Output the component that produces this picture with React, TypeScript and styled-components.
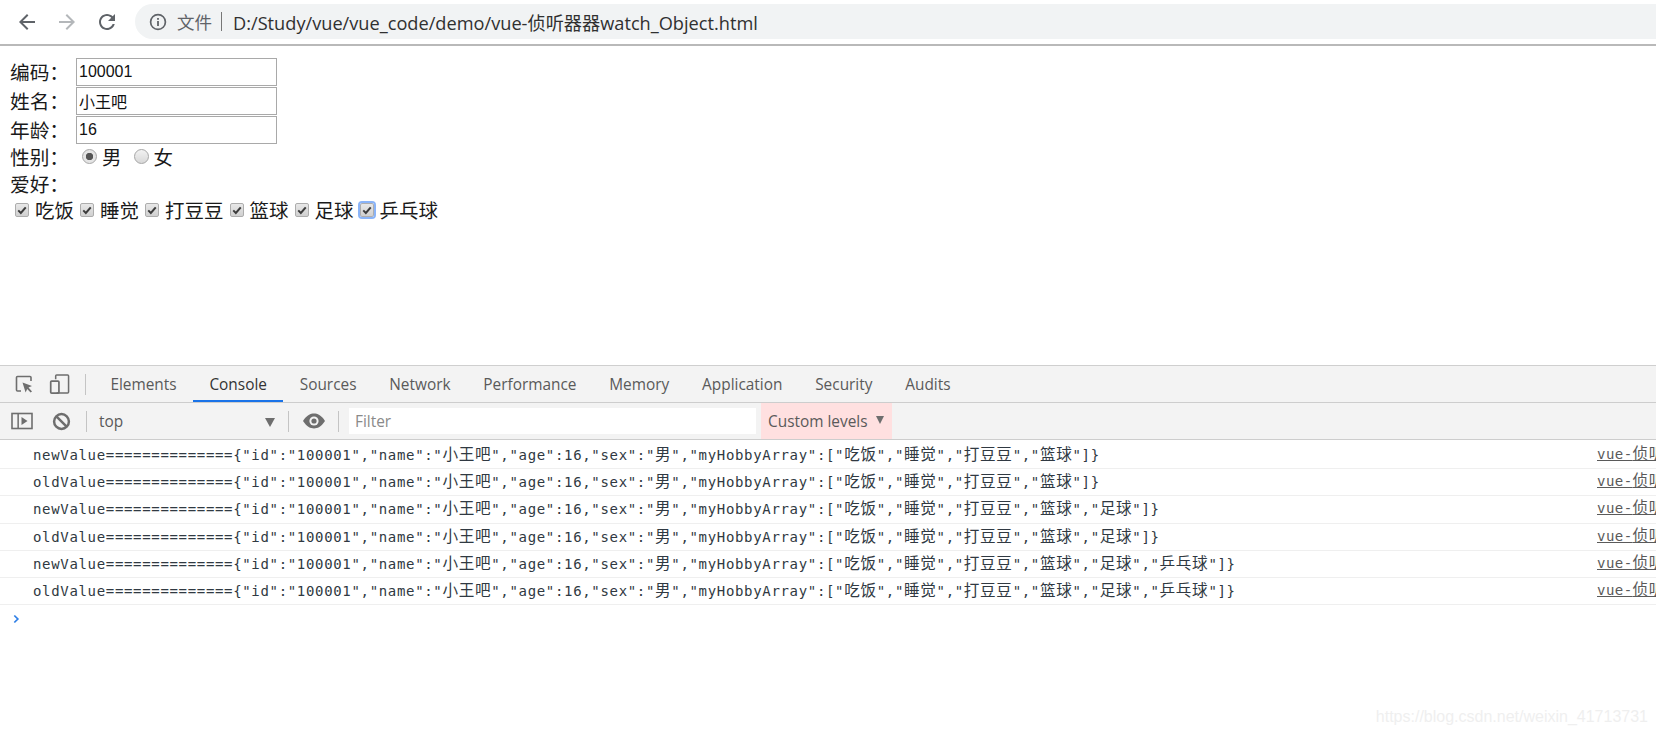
import React from "react";
import styled, { createGlobalStyle } from "styled-components";

const CJK = '"Noto Sans CJK SC", sans-serif';
const UI = '"Open Sans", "Noto Sans CJK SC", sans-serif';
const MONO = '"DejaVu Sans Mono", "Noto Sans CJK SC", monospace';

const tabs = ["Elements", "Console", "Sources", "Network", "Performance", "Memory", "Application", "Security", "Audits"];
const hobbies = ["吃饭", "睡觉", "打豆豆", "篮球", "足球", "乒乓球"];

const base = '{"id":"100001","name":"小王吧","age":16,"sex":"男","myHobbyArray":["吃饭","睡觉","打豆豆","篮球"';
const logs = [
  `newValue==============${base}]}`,
  `oldValue==============${base}]}`,
  `newValue==============${base},"足球"]}`,
  `oldValue==============${base},"足球"]}`,
  `newValue==============${base},"足球","乒乓球"]}`,
  `oldValue==============${base},"足球","乒乓球"]}`,
];

const App = () => {
  return (
    <Window>
      <GlobalStyle />
      <BrowserBar>
        <NavButton $dim={false}>
          <svg viewBox="0 0 24 24" width="24" height="24"><path d="M20 11H7.83l5.59-5.59L12 4l-8 8 8 8 1.41-1.41L7.83 13H20v-2z" /></svg>
        </NavButton>
        <NavButton $dim={true}>
          <svg viewBox="0 0 24 24" width="24" height="24"><path d="M4 11h12.17l-5.59-5.59L12 4l8 8-8 8-1.41-1.41L16.17 13H4v-2z" /></svg>
        </NavButton>
        <NavButton $dim={false}>
          <svg viewBox="0 0 24 24" width="24" height="24"><path d="M17.65 6.35C16.2 4.9 14.21 4 12 4c-4.42 0-7.99 3.58-7.99 8s3.57 8 7.99 8c3.73 0 6.84-2.55 7.73-6h-2.08c-.82 2.33-3.04 4-5.65 4-3.31 0-6-2.69-6-6s2.69-6 6-6c1.66 0 3.14.69 4.22 1.78L13 11h7V4l-2.35 2.35z" /></svg>
        </NavButton>
        <AddressPill>
          <svg viewBox="0 0 18 18" width="18" height="18">
            <circle cx="9" cy="9" r="7.4" fill="none" stroke="#5f6368" strokeWidth="1.7" />
            <rect x="8.1" y="8" width="1.8" height="5" fill="#5f6368" />
            <rect x="8.1" y="5" width="1.8" height="1.8" fill="#5f6368" />
          </svg>
          <Scheme>文件</Scheme>
          <SchemeBar />
          <Url>D:/Study/vue/vue_code/demo/vue-侦听器器watch_Object.html</Url>
        </AddressPill>
      </BrowserBar>

      <Page>
        <FieldRow>
          <FieldLabel>编码：</FieldLabel>
          <TextInput readOnly value="100001" />
        </FieldRow>
        <FieldRow>
          <FieldLabel>姓名：</FieldLabel>
          <TextInput readOnly value="小王吧" />
        </FieldRow>
        <FieldRow>
          <FieldLabel>年龄：</FieldLabel>
          <TextInput readOnly value="16" />
        </FieldRow>
        <ChoiceRow $h={25}>
          <FieldLabel>性别：</FieldLabel>
          <Radio $on={true} />
          <ChoiceText>男</ChoiceText>
          <Radio $on={false} />
          <ChoiceText>女</ChoiceText>
        </ChoiceRow>
        <ChoiceRow $h={29}>
          <FieldLabel>爱好：</FieldLabel>
        </ChoiceRow>
        <HobbyRow>
          {hobbies.map((h, i) => (
            <Hobby key={h}>
              <CheckBox $focused={i === 5}>
                <svg viewBox="0 0 12 12" width="10" height="10">
                  <path d="M1.5 6.5 L4.6 9.6 L10.5 2.8" fill="none" stroke="#3c3c3c" strokeWidth="2.4" />
                </svg>
              </CheckBox>
              <ChoiceText>{h}</ChoiceText>
            </Hobby>
          ))}
        </HobbyRow>
      </Page>

      <DevTools>
        <TabBar>
          <TabIcon>
            <svg viewBox="0 0 20 20" width="20" height="20">
              <path d="M7 17H3.5a1 1 0 0 1-1-1V3.5a1 1 0 0 1 1-1H16a1 1 0 0 1 1 1V7" fill="none" stroke="#6e6e6e" strokeWidth="1.6" />
              <path d="M8.5 8.5 L18 12 L14.5 13.6 L18 17.4 L16.6 18.6 L13.2 15 L11.6 18.4 Z" fill="#6e6e6e" />
            </svg>
          </TabIcon>
          <TabIcon>
            <svg viewBox="0 0 22 22" width="22" height="22">
              <path d="M7 6V2.5a1 1 0 0 1 1-1h11.5a1 1 0 0 1 1 1v17a1 1 0 0 1-1 1H8" fill="none" stroke="#6e6e6e" strokeWidth="1.6" />
              <rect x="1.8" y="8" width="8.6" height="12.6" rx="1" fill="none" stroke="#6e6e6e" strokeWidth="1.8" />
            </svg>
          </TabIcon>
          <Divider $left={7} $right={8} />
          {tabs.map((t) => (
            <Tab key={t} $active={t === "Console"}>{t}</Tab>
          ))}
        </TabBar>

        <ConsoleBar>
          <BarIcon $w={22} $ml={11}>
            <svg viewBox="0 0 22 18" width="22" height="18">
              <rect x="1" y="1.5" width="20" height="15" fill="none" stroke="#6e6e6e" strokeWidth="1.6" />
              <rect x="6.4" y="1.5" width="1.5" height="15" fill="#6e6e6e" />
              <path d="M10.5 5 L16.5 9 L10.5 13 Z" fill="#6e6e6e" />
            </svg>
          </BarIcon>
          <BarIcon $w={19} $ml={19}>
            <svg viewBox="0 0 20 20" width="19" height="19">
              <circle cx="10" cy="10" r="7.8" fill="none" stroke="#6e6e6e" strokeWidth="2.6" />
              <path d="M4.6 4.6 L15.4 15.4" stroke="#6e6e6e" strokeWidth="2.6" />
            </svg>
          </BarIcon>
          <Divider $left={15} $right={0} />
          <ContextSelect>
            top
            <Caret />
          </ContextSelect>
          <Divider $left={0} $right={0} />
          <BarIcon $w={24} $ml={13}>
            <svg viewBox="0 0 24 16" width="24" height="16">
              <path d="M1 8 C5 2 8.5 0.6 12 0.6 S19 2 23 8 C19 14 15.5 15.4 12 15.4 S5 14 1 8 Z" fill="#6e6e6e" />
              <circle cx="12" cy="8" r="4.6" fill="#f3f3f3" />
              <circle cx="12" cy="8" r="2.6" fill="#6e6e6e" />
            </svg>
          </BarIcon>
          <Divider $left={12} $right={10} />
          <FilterBox>Filter</FilterBox>
          <LevelsButton>
            Custom levels
            <LevelsCaret />
          </LevelsButton>
        </ConsoleBar>

        <LogArea>
          {logs.map((line, i) => (
            <LogRow key={i}>
              <LogText>
                {line.split(/([\u4e00-\u9fff]+)/).map((part, j) =>
                  j % 2 === 1 ? <Han key={j}>{part}</Han> : part
                )}
              </LogText>
              <SourceLink>vue-<Han>侦听器器</Han>watch_Object.html:1</SourceLink>
            </LogRow>
          ))}
          <Prompt>
            <svg viewBox="0 0 8 10" width="7" height="10">
              <path d="M1.5 1 L5.5 5 L1.5 9" fill="none" stroke="#2f7fe6" strokeWidth="2" />
            </svg>
          </Prompt>
        </LogArea>
        <Watermark>https://blog.csdn.net/weixin_41713731</Watermark>
      </DevTools>
    </Window>
  );
};

const GlobalStyle = createGlobalStyle`
  html, body {
    margin: 0;
    padding: 0;
    background: #fff;
    overflow: hidden;
  }
  * {
    box-sizing: border-box;
  }
`;

const Window = styled.div`
  width: 1656px;
  height: 735px;
  display: flex;
  flex-direction: column;
  overflow: hidden;
`;

const BrowserBar = styled.div`
  height: 46px;
  flex: none;
  display: flex;
  align-items: flex-start;
  padding: 4px 0 0 15px;
  background: #fff;
  border-bottom: 2px solid #b9b9b9;
`;
const NavButton = styled.div<{ $dim: boolean }>`
  width: 40px;
  height: 35px;
  display: flex;
  align-items: center;
  svg {
    fill: ${({ $dim }) => ($dim ? "#b4b7ba" : "#5f6368")};
  }
`;
const AddressPill = styled.div`
  flex: 1;
  height: 35px;
  padding-left: 14px;
  display: flex;
  align-items: center;
  background: #f1f3f4;
  border-radius: 18px 0 0 18px;
`;
const Scheme = styled.span`
  margin-left: 10px;
  font: 17.5px ${CJK};
  color: #5f6368;
`;
const SchemeBar = styled.span`
  width: 1px;
  height: 19px;
  margin: 0 11px 0 9px;
  background: #777;
`;
const Url = styled.span`
  font: 18.2px ${UI};
  color: #303030;
`;

const Page = styled.div`
  height: 319px;
  flex: none;
  padding-top: 11px;
  background: #fff;
`;
const FieldRow = styled.div`
  height: 29px;
  display: flex;
  align-items: center;
  padding-left: 10px;
`;
const FieldLabel = styled.span`
  width: 66px;
  flex: none;
  font: 19.7px/1 ${CJK};
  color: #1a1a1a;
`;
const TextInput = styled.input`
  width: 201px;
  height: 28px;
  padding: 0 2px;
  border: 1px solid #a9a9a9;
  outline: none;
  font: 16px "Liberation Sans", ${CJK};
  color: #111;
`;
const ChoiceRow = styled.div<{ $h: number }>`
  height: ${({ $h }) => $h}px;
  display: flex;
  align-items: center;
  padding-left: 10px;
`;
const Radio = styled.span<{ $on: boolean }>`
  width: 15px;
  height: 15px;
  margin: 0 5px 0 6px;
  flex: none;
  border-radius: 50%;
  border: 1px solid #a6a6a6;
  background: ${({ $on }) =>
    $on
      ? "radial-gradient(circle, #555 0 3.4px, #e4e4e4 4px)"
      : "linear-gradient(#f2f2f2, #d8d8d8)"};
  & + span + & {
    margin-left: 12px;
  }
`;
const ChoiceText = styled.span`
  font: 19.5px/1 ${CJK};
  color: #1a1a1a;
`;
const HobbyRow = styled.div`
  height: 23px;
  display: flex;
  align-items: center;
  padding-left: 15px;
  gap: 6px;
`;
const Hobby = styled.div`
  display: flex;
  align-items: center;
  gap: 6px;
`;
const CheckBox = styled.span<{ $focused: boolean }>`
  width: 14px;
  height: 14px;
  flex: none;
  display: flex;
  align-items: center;
  justify-content: center;
  border-radius: 2px;
  border: 1px solid #adadad;
  background: linear-gradient(#e8e8e8, #d0d0d0);
  outline: ${({ $focused }) => ($focused ? "2px solid #8ab4f8" : "none")};
`;

const DevTools = styled.div`
  position: relative;
  flex: 1;
  display: flex;
  flex-direction: column;
  min-height: 0;
`;
const TabBar = styled.div`
  height: 38px;
  flex: none;
  display: flex;
  align-items: center;
  padding-left: 14px;
  background: #f3f3f3;
  border-top: 1px solid #cfcfcf;
  border-bottom: 1px solid #cdcdcd;
`;
const TabIcon = styled.span`
  width: 21px;
  margin-right: 14px;
  display: flex;
  align-items: center;
  &:nth-child(2) {
    margin-right: 8px;
  }
`;
const Divider = styled.span<{ $left: number; $right: number }>`
  width: 1px;
  height: 21px;
  flex: none;
  margin: 0 ${({ $right }) => $right}px 0 ${({ $left }) => $left}px;
  background: #c4c4c4;
`;
const Tab = styled.div<{ $active: boolean }>`
  height: 100%;
  padding: 0 16.4px;
  display: flex;
  align-items: center;
  font: 15.4px ${UI};
  color: ${({ $active }) => ($active ? "#333" : "#5a5a5a")};
  box-shadow: ${({ $active }) => ($active ? "inset 0 -2px 0 #1a73e8" : "none")};
`;
const ConsoleBar = styled.div`
  height: 37px;
  flex: none;
  display: flex;
  align-items: center;
  background: #f3f3f3;
  border-bottom: 1px solid #cdcdcd;
`;
const BarIcon = styled.span<{ $w: number; $ml: number }>`
  width: ${({ $w }) => $w}px;
  margin-left: ${({ $ml }) => $ml}px;
  flex: none;
  display: flex;
  align-items: center;
`;
const ContextSelect = styled.div`
  position: relative;
  width: 201px;
  padding-left: 12px;
  font: 15.4px ${UI};
  color: #5a5a5a;
`;
const Caret = styled.span`
  position: absolute;
  top: 7px;
  right: 13px;
  border-left: 5px solid transparent;
  border-right: 5px solid transparent;
  border-top: 9px solid #6e6e6e;
`;
const FilterBox = styled.div`
  width: 407px;
  height: 26px;
  padding-left: 6px;
  display: flex;
  align-items: center;
  background: #fff;
  font: 15.4px ${UI};
  color: #8a8a8a;
`;
const LevelsButton = styled.div`
  position: relative;
  width: 131px;
  height: 36px;
  margin-left: 5px;
  padding-left: 7px;
  display: flex;
  align-items: center;
  background: #ffe0e0;
  font: 15.4px ${UI};
  color: #5a5a5a;
`;
const LevelsCaret = styled.span`
  position: absolute;
  top: 13px;
  right: 8px;
  border-left: 4.5px solid transparent;
  border-right: 4.5px solid transparent;
  border-top: 8px solid #6e6e6e;
`;

const LogArea = styled.div`
  flex: 1;
  padding-top: 2px;
  background: #fff;
`;
const LogRow = styled.div`
  height: 27.2px;
  display: flex;
  align-items: center;
  padding: 0 0 2px 33px;
  border-bottom: 1px solid #efefef;
  white-space: nowrap;
  overflow: hidden;
`;
const LogText = styled.span`
  flex: 1;
  font: 14px/1 ${MONO};
  letter-spacing: 0.67px;
  color: #303942;
`;
const Han = styled.span`
  font: 15.6px/1 ${CJK};
`;
const SourceLink = styled.span`
  width: 59px;
  flex: none;
  overflow: hidden;
  font: 14px/1.3 ${MONO};
  letter-spacing: 0.47px;
  color: #5a5a5a;
  text-decoration: underline;
`;
const Prompt = styled.div`
  height: 27px;
  padding-left: 13px;
  display: flex;
  align-items: center;
`;
const Watermark = styled.div`
  position: absolute;
  right: 8px;
  bottom: 9px;
  font: 16px "Liberation Sans", sans-serif;
  color: #efefef;
`;

export default App;
